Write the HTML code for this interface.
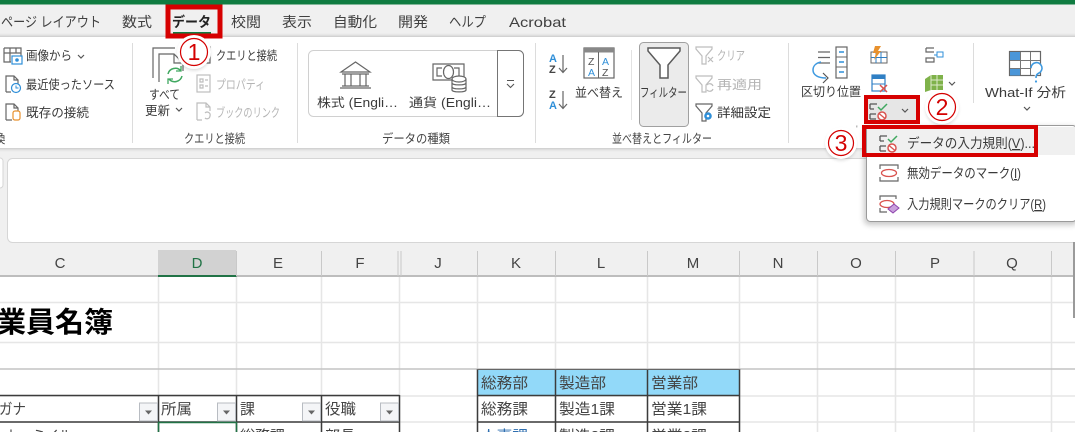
<!DOCTYPE html>
<html lang="ja"><head><meta charset="utf-8"><title>Excel データの入力規則</title>
<style>
html,body{margin:0;padding:0;width:1075px;height:432px;overflow:hidden;background:#fff}
svg{display:block}
text{font-family:"Liberation Sans","Noto Sans CJK JP",sans-serif;font-size:12.5px;fill:#3a3a3a}
.tab{font-size:14px;fill:#404040}
.d{fill:#b4b4b4}
.cell{font-size:15px;fill:#444}
.col{font-size:15px;fill:#444;text-anchor:middle}
.lbl{font-size:12.5px;fill:#444}
.g{fill:none;stroke:#666;stroke-width:1.2}
.lt{fill:none;stroke:#bdbdbd;stroke-width:1.2}
.grid{stroke:#e6e6e6;stroke-width:1.5}
.blk{stroke:#3c3c3c;stroke-width:1.5}
.chev{fill:none;stroke:#555;stroke-width:1.2}
.num{font-size:23px;fill:#d40000;text-anchor:middle}
</style></head><body>
<svg width="1075" height="432" viewBox="0 0 1075 432" xmlns="http://www.w3.org/2000/svg">
<defs>
<filter id="sh" x="-30%" y="-30%" width="160%" height="160%"><feGaussianBlur stdDeviation="3"/></filter>
<filter id="sm" x="-30%" y="-30%" width="160%" height="160%"><feGaussianBlur stdDeviation="1.5"/></filter>
<g id="fb"><rect x=".5" y=".5" width="18" height="18" fill="#f4f5f7" stroke="#b8bcc2"/><path d="M6 8h7l-3.500 4z" fill="#666"/></g>
<path id="val" d="M0 2h7M0 7h4M0 12h6M0 17h6M0 2v5M0 12v5" fill="none" stroke="#555" stroke-width="1.3"/>
</defs>

<rect width="1075" height="432" fill="#fff"/>
<!-- window chrome -->
<rect width="1075" height="250" fill="#f0f0f0"/>
<rect width="1075" height="4.500" fill="#107c41"/>
<rect x="-6" y="36" width="1090" height="113" rx="5" fill="#000" opacity=".2" filter="url(#sm)"/>
<rect x="-6" y="37" width="1090" height="111" rx="5" fill="#fff"/>
<!-- formula bar -->
<rect x="-8" y="158" width="11" height="30" rx="3" fill="#fff" stroke="#d6d6d6"/>
<rect x="7.500" y="158.500" width="1080" height="84" rx="5" fill="#fff" stroke="#d6d6d6"/>

<!-- tabs -->
<text class="tab" x="1" y="27" textLength="100" lengthAdjust="spacingAndGlyphs">ページ レイアウト</text>
<text class="tab" x="122" y="27" textLength="30" lengthAdjust="spacingAndGlyphs">数式</text>
<text class="tab" x="172" y="27" textLength="39" lengthAdjust="spacingAndGlyphs" font-weight="bold" style="fill:#222">データ</text>
<rect x="173" y="32" width="38" height="2" fill="#107c41"/>
<text class="tab" x="231" y="27" textLength="30" lengthAdjust="spacingAndGlyphs">校閲</text>
<text class="tab" x="282" y="27" textLength="30" lengthAdjust="spacingAndGlyphs">表示</text>
<text class="tab" x="333" y="27" textLength="44" lengthAdjust="spacingAndGlyphs">自動化</text>
<text class="tab" x="398" y="27" textLength="30" lengthAdjust="spacingAndGlyphs">開発</text>
<text class="tab" x="449" y="27" textLength="37" lengthAdjust="spacingAndGlyphs">ヘルプ</text>
<text class="tab" x="509" y="27" textLength="57" lengthAdjust="spacingAndGlyphs">Acrobat</text>

<!-- group separators -->
<path d="M132.500 43v100M297.500 43v100M535.500 43v100M788.500 43v100M973.500 43v60" stroke="#dcdcdc" fill="none"/>
<path d="M631.500 50v70" stroke="#e2e2e2" fill="none"/>

<!-- get data group -->
<path class="g" d="M4 48h17v14M4 48v14h7M4 53h17M10 48v14M16 48v5"/>
<rect x="12" y="56" width="10" height="8" fill="#fff" stroke="#2f8fd8" stroke-width="1.2"/><circle cx="17" cy="60" r="1.800" fill="#2f8fd8"/>
<text x="26" y="60" textLength="46" lengthAdjust="spacingAndGlyphs">画像から</text>
<path class="chev" d="M78 55l3 3 3-3"/>
<path class="g" d="M6 92V76h8l4 4v4M14 76v4h4M6 92h5"/>
<circle cx="16" cy="88" r="4.500" fill="#fff" stroke="#2f8fd8" stroke-width="1.200"/><path d="M16 85.500V88h2.500" fill="none" stroke="#2f8fd8"/>
<text x="26" y="89" textLength="89" lengthAdjust="spacingAndGlyphs">最近使ったソース</text>
<path class="g" d="M6 120v-16h8l4 4v4M14 104v4h4M6 120h6"/>
<rect x="13" y="111" width="7" height="9" rx="2" fill="#fff" stroke="#e8912d" stroke-width="1.200"/>
<text x="26" y="117" textLength="63" lengthAdjust="spacingAndGlyphs">既存の接続</text>
<text class="lbl" x="-7" y="143">換</text>

<!-- queries -->
<path class="g" d="M153 78V48h22M159 82V54h15l9 9v8M174 54v9h9" stroke-width="1.400"/>
<path d="M168 74a7.500 7.500 0 0 1 13-3M182 76a7.500 7.500 0 0 1-13 3" fill="none" stroke="#40a860" stroke-width="1.500"/>
<path d="M181 66v5h-5M168 84v-5h5" fill="none" stroke="#40a860" stroke-width="1.300"/>
<text x="149" y="99" textLength="31" lengthAdjust="spacingAndGlyphs">すべて</text>
<text x="145" y="115" textLength="25" lengthAdjust="spacingAndGlyphs">更新</text>
<path class="chev" d="M176 108l3 3 3-3"/>
<path d="M206 47h4v16h-4" class="g" stroke-width="1.400"/>
<text x="216" y="60" textLength="61" lengthAdjust="spacingAndGlyphs">クエリと接続</text>
<rect x="197" y="75" width="13" height="17" class="lt"/><path class="lt" d="M200 79h3v3h-3zM200 85h3v3h-3zM205 80h3M205 86h3"/>
<text class="d" x="216" y="89" textLength="49" lengthAdjust="spacingAndGlyphs">プロパティ</text>
<path class="lt" d="M197 120v-17h9l4 4v4M206 103v4h4M197 120h5"/><path class="lt" d="M205 113a3 3 0 0 1 5 3a3 3 0 0 1-5 2"/>
<text class="d" x="216" y="117" textLength="64" lengthAdjust="spacingAndGlyphs">ブックのリンク</text>
<text class="lbl" x="184" y="143" textLength="61" lengthAdjust="spacingAndGlyphs">クエリと接続</text>

<!-- data types -->
<rect x="308.500" y="50.500" width="215" height="66" rx="5" fill="#fff" stroke="#d0d0d0"/>
<path d="M497.500 50.500h21a5 5 0 0 1 5 5v56a5 5 0 0 1-5 5h-21z" fill="#fff" stroke="#757575"/>
<path d="M507 80.500h7M507 84l3.500 3.500 3.500-3.500" fill="none" stroke="#555" stroke-width="1.100"/>
<path class="g" d="M341 72l14.500-10 14.500 10zM342 74h27M342 86h27M345 74v12M351 74v12M360 74v12M366 74v12M340 88h31" stroke-width="1.200"/>
<path class="g" d="M456 80h-23V64h31v14M442 68h-5v8h5M454 68h5v8"/>
<ellipse cx="448.500" cy="72" rx="5" ry="6.500" class="g"/>
<g fill="#fff" stroke="#666" stroke-width="1.200"><path d="M452 79v11c0 2.500 14 2.500 14 0V79"/><ellipse cx="459" cy="79" rx="7" ry="3"/><path d="M452 83c0 2.500 14 2.500 14 0M452 87c0 2.500 14 2.500 14 0" fill="none"/></g>
<text x="317" y="107" textLength="81" lengthAdjust="spacingAndGlyphs">株式 (Engli…</text>
<text x="409" y="107" textLength="82" lengthAdjust="spacingAndGlyphs">通貨 (Engli…</text>
<text class="lbl" x="382" y="143" textLength="68" lengthAdjust="spacingAndGlyphs">データの種類</text>

<!-- sort -->
<text x="549" y="62" style="font-size:11px;font-weight:bold;fill:#2f8fd8">A</text><text x="549" y="73" style="font-size:11px;font-weight:bold;fill:#444">Z</text>
<path d="M563 55v17M559 68l4 4.500 4-4.500" class="g"/>
<text x="549" y="98" style="font-size:11px;font-weight:bold;fill:#444">Z</text><text x="549" y="109" style="font-size:11px;font-weight:bold;fill:#2f8fd8">A</text>
<path d="M563 91v17M559 104l4 4.500 4-4.500" class="g"/>
<rect x="584" y="48" width="30" height="30" fill="#fff" stroke="#666" stroke-width="1.200"/><rect x="584" y="48" width="30" height="4.500" fill="#888"/><path d="M598.500 52v26" stroke="#666"/>
<text x="588" y="65" style="font-size:10.500px;fill:#555">Z</text><text x="588" y="76" style="font-size:10.500px;fill:#2f8fd8">A</text><text x="602" y="65" style="font-size:10.500px;fill:#2f8fd8">A</text><text x="602" y="76" style="font-size:10.500px;fill:#555">Z</text>
<text x="575" y="97" textLength="48" lengthAdjust="spacingAndGlyphs">並べ替え</text>

<!-- filter -->
<rect x="639.500" y="42.500" width="49" height="84" rx="4" fill="#ebebeb" stroke="#a0a0a0"/>
<path d="M648 48h32v3l-12 14v13h-8V65L648 51z" fill="#fff" stroke="#5a5a5a" stroke-width="1.500"/>
<text x="640" y="97" textLength="47" lengthAdjust="spacingAndGlyphs">フィルター</text>
<path class="lt" d="M696 47h16v2l-6 7v8h-4v-8l-6-7z"/><path class="lt" d="M708 57l5 5M713 57l-5 5"/>
<path class="lt" d="M696 76h16v2l-6 7v7h-4v-7l-6-7z"/><path class="lt" d="M707 85a3.500 3.500 0 0 1 6 1M713 89a3.500 3.500 0 0 1-6 1"/>
<text class="d" x="717" y="60" textLength="28" lengthAdjust="spacingAndGlyphs">クリア</text>
<text class="d" x="717" y="89" textLength="45" lengthAdjust="spacingAndGlyphs">再適用</text>
<path class="g" d="M696 104h16v2l-6 7v8h-4v-8l-6-7z"/><circle cx="708" cy="116" r="3.800" fill="#2f8fd8"/><circle cx="708" cy="116" r="1.300" fill="#fff"/>
<text x="717" y="117" textLength="54" lengthAdjust="spacingAndGlyphs" style="fill:#333">詳細設定</text>
<text class="lbl" x="612" y="143" textLength="100" lengthAdjust="spacingAndGlyphs">並べ替えとフィルター</text>

<!-- data tools -->
<path class="g" d="M818 52h12M818 57.500h12M818 63h12"/>
<rect x="836" y="47" width="11" height="31" fill="#fff" stroke="#666" stroke-width="1.200"/><path d="M836 57h11M836 67h11" stroke="#666"/><path d="M839 52h5M839 62h5M839 72h5" stroke="#2f8fd8" stroke-width="1.400"/>
<path d="M821 62c-5 1-8 4-8 8 0 5 5 8 13 8" fill="none" stroke="#3f9ae0" stroke-width="1.500"/><path d="M823 73l5 5-5 5" fill="none" stroke="#555" stroke-width="1.200"/>
<text x="801" y="96" textLength="60" lengthAdjust="spacingAndGlyphs">区切り位置</text>
<rect x="871" y="52" width="16" height="11" fill="#fff" stroke="#666"/><path d="M871 57.500h16M876 52v11M881 52v11" stroke="#2f7fc4"/><path d="M875 46h6l-3 5h3l-7 9 2-7h-3z" fill="#e8912d"/>
<rect x="872" y="75" width="13" height="16" fill="#fff" stroke="#2f7fc4" stroke-width="1.200"/><rect x="872" y="75" width="13" height="4" fill="#2f7fc4"/><path d="M872 84h13" stroke="#2f7fc4"/><path d="M880 85l7 7M887 85l-7 7" stroke="#d9534f" stroke-width="1.500"/>
<rect x="867" y="98" width="50" height="23" fill="#e6e6e6"/>
<use href="#val" x="870" y="102"/>
<path d="M878 107l3 3 6-6" fill="none" stroke="#40a860" stroke-width="1.500"/><circle cx="882" cy="116" r="4" fill="#fff" stroke="#d9534f" stroke-width="1.500"/><path d="M879 113.500l6 5" stroke="#d9534f" stroke-width="1.300"/>
<path class="chev" d="M902 109l3 3 3-3"/>
<path class="g" d="M926 48h8M926 48v4h8M926 58h8v4h-8z"/><path d="M934 55h3" stroke="#2f8fd8"/><rect x="937" y="52" width="6" height="5" fill="none" stroke="#2f8fd8"/>
<path d="M925 79l6-4h12v15h-12l-6 2z" fill="#7fb24a"/><path d="M931 75v15M937 75v15M931 80h12M931 85h12" stroke="#dcebc9"/>
<path class="chev" d="M949 82l3 3 3-3"/>
<text x="856" y="132" style="font-size:9px;fill:#777">'</text>

<!-- what-if -->
<rect x="1009.500" y="51.500" width="31" height="24" fill="#fff" stroke="#666" stroke-width="1.200"/><rect x="1010" y="52" width="10" height="8" fill="#4a96d8"/><rect x="1010" y="68" width="10" height="7.500" fill="#4a96d8"/><path d="M1020.500 52v23M1030.500 52v23M1010 60.500h30M1010 68.500h30" stroke="#777"/>
<path d="M1031 68a5.500 5.500 0 1 1 8 5c-2 1-3 2-3 5" fill="#fff" stroke="#3f9ae0" stroke-width="1.600"/><circle cx="1036" cy="81.500" r="1.100" fill="#3f9ae0"/>
<text x="985" y="97" textLength="81" lengthAdjust="spacingAndGlyphs" style="font-size:13px">What-If 分析</text>
<path class="chev" d="M1024 107l3 3 3-3"/>

<!-- column headers -->
<rect y="250" width="1075" height="26" fill="#f0f0f0"/>
<rect x="158" y="250" width="78" height="26" fill="#d2d2d2"/>
<rect y="275" width="1075" height="2" fill="#bdbdbd"/>
<rect x="158" y="275" width="78.500" height="2" fill="#217346"/>
<path d="M236.500 251v25M321.500 251v25M398 251v25M401 251v25M477.500 251v25M555.500 251v25M647.500 251v25M739.500 251v25M817.500 251v25M895.500 251v25M974 251v25M1051.500 251v25" stroke="#c9c9c9" fill="none"/>
<text class="col" x="60" y="268">C</text><text class="col" x="197" y="268" style="fill:#217346">D</text><text class="col" x="278" y="268">E</text><text class="col" x="360" y="268">F</text><text class="col" x="438" y="268">J</text><text class="col" x="516" y="268">K</text><text class="col" x="601" y="268">L</text><text class="col" x="693" y="268">M</text><text class="col" x="778" y="268">N</text><text class="col" x="856" y="268">O</text><text class="col" x="935" y="268">P</text><text class="col" x="1012" y="268">Q</text>

<!-- grid -->
<path class="grid" fill="none" d="M0 302.500H1075M0 342.500H1075M0 396H1075M0 422H1075M158.500 277V432M236.500 277V432M321.500 277V432M399.500 277V432M477.500 277V432M555.500 277V432M647.500 277V432M739.500 277V432M817.500 277V432M895.500 277V432M974 277V432M1051.500 277V432"/>
<path d="M0 369H1075" stroke="#c4c4c4" stroke-width="1.500"/>
<rect x="1073" y="242" width="2" height="76" fill="#9a9a9a"/>

<text x="-3" y="332" textLength="116" lengthAdjust="spacingAndGlyphs" style="font-size:28.500px;font-weight:bold;fill:#000">業員名簿</text>

<!-- left table -->
<path class="blk" fill="none" d="M0 395.500H399.500M0 422H399.500M158.500 395V432M236.500 395V432M321.500 395V432M399.500 395V432"/>
<path d="M158.500 432V422.500H236.500V432" fill="none" stroke="#217346" stroke-width="1.500"/>
<text class="cell" x="-1" y="414" textLength="27" lengthAdjust="spacingAndGlyphs">ガナ</text>
<text class="cell" x="161" y="414" textLength="31" lengthAdjust="spacingAndGlyphs">所属</text>
<text class="cell" x="240" y="414">課</text>
<text class="cell" x="325" y="414" textLength="31" lengthAdjust="spacingAndGlyphs">役職</text>
<use href="#fb" x="139" y="402.500"/><use href="#fb" x="217" y="402.500"/><use href="#fb" x="302" y="402.500"/><use href="#fb" x="380" y="402.500"/>
<text class="cell" x="6" y="441" textLength="66" lengthAdjust="spacingAndGlyphs">トーミイル</text>
<text class="cell" x="240" y="441">総務課</text>
<text class="cell" x="325" y="441">部長</text>

<!-- right table -->
<rect x="477" y="369.500" width="262.500" height="26" fill="#92d9f9"/>
<path class="blk" fill="none" d="M477.500 369V432M555.500 369V432M647.500 369V432M739.500 369V432M477 395.500H740M477 422H740"/>
<path d="M477 369.500H740" stroke="#666"/>
<text class="cell" x="481" y="388" textLength="47" lengthAdjust="spacingAndGlyphs">総務部</text>
<text class="cell" x="559" y="388" textLength="47" lengthAdjust="spacingAndGlyphs">製造部</text>
<text class="cell" x="651" y="388" textLength="47" lengthAdjust="spacingAndGlyphs">営業部</text>
<text class="cell" x="481" y="414" textLength="47" lengthAdjust="spacingAndGlyphs">総務課</text>
<text class="cell" x="559" y="414" textLength="56" lengthAdjust="spacingAndGlyphs">製造1課</text>
<text class="cell" x="651" y="414" textLength="56" lengthAdjust="spacingAndGlyphs">営業1課</text>
<text class="cell" x="481" y="441" textLength="47" lengthAdjust="spacingAndGlyphs" style="fill:#2f6fb0">人事課</text>
<text class="cell" x="559" y="441" textLength="56" lengthAdjust="spacingAndGlyphs">製造2課</text>
<text class="cell" x="651" y="441" textLength="56" lengthAdjust="spacingAndGlyphs">営業2課</text>

<!-- dropdown menu -->
<rect x="864" y="127" width="214" height="98" rx="5" fill="#000" opacity=".22" filter="url(#sh)"/>
<rect x="866.500" y="125.500" width="210" height="96" rx="4" fill="#fff" stroke="#9a9a9a"/>
<rect x="867" y="127" width="208" height="28" fill="#f0f0f0"/>
<use href="#val" x="880" y="134"/>
<path d="M888 139l3 3 6-6" fill="none" stroke="#40a860" stroke-width="1.500"/><circle cx="892" cy="148" r="4" fill="#fff" stroke="#d9534f" stroke-width="1.500"/><path d="M889 145.500l6 5" stroke="#d9534f" stroke-width="1.300"/>
<text x="907" y="148" textLength="128" lengthAdjust="spacingAndGlyphs" style="font-size:13.500px">データの入力規則(<tspan text-decoration="underline">V</tspan>)...</text>
<path class="g" d="M880 169v-4h18v4M880 177v4h18v-4"/><ellipse cx="889" cy="173" rx="7.500" ry="3.500" fill="#fff" stroke="#d9534f" stroke-width="1.300"/>
<text x="907" y="178" textLength="114" lengthAdjust="spacingAndGlyphs" style="font-size:13.500px">無効データのマーク(<tspan text-decoration="underline">I</tspan>)</text>
<path class="g" d="M880 200v-4h16v3M880 208v4h7"/><ellipse cx="887" cy="204" rx="7" ry="3.500" fill="#fff" stroke="#d9534f" stroke-width="1.300"/><path d="M888 209l6-5 5 4-6 5z" fill="#c9a0dc" stroke="#8e44ad"/>
<text x="907" y="209" textLength="139" lengthAdjust="spacingAndGlyphs" style="font-size:13.500px">入力規則マークのクリア(<tspan text-decoration="underline">R</tspan>)</text>

<!-- red annotation boxes -->
<g fill="none" stroke="#d60000">
<rect x="168" y="7" width="52" height="29" stroke-width="5"/>
<rect x="866" y="97" width="52" height="25" stroke-width="4"/>
<rect x="864" y="127" width="172" height="28" stroke-width="4"/>
</g>

<!-- numbered circles -->
<g>
<circle cx="194" cy="54" r="16.500" fill="#000" opacity=".14" filter="url(#sm)"/><circle cx="194" cy="52" r="17" fill="#fff"/><circle cx="194" cy="52" r="13.500" fill="#fff" stroke="#d40000" stroke-width="1.200"/><text class="num" x="194" y="60">1</text>
<circle cx="942" cy="109" r="16.500" fill="#000" opacity=".14" filter="url(#sm)"/><circle cx="942" cy="107" r="17" fill="#fff"/><circle cx="942" cy="107" r="13.500" fill="#fff" stroke="#d40000" stroke-width="1.200"/><text class="num" x="942" y="115">2</text>
<circle cx="841" cy="145" r="15.500" fill="#000" opacity=".14" filter="url(#sm)"/><circle cx="841" cy="143" r="16" fill="#fff"/><circle cx="841" cy="143" r="12.500" fill="#fff" stroke="#d40000" stroke-width="1.200"/><text class="num" x="841" y="151">3</text>
</g>
</svg>
</body></html>
